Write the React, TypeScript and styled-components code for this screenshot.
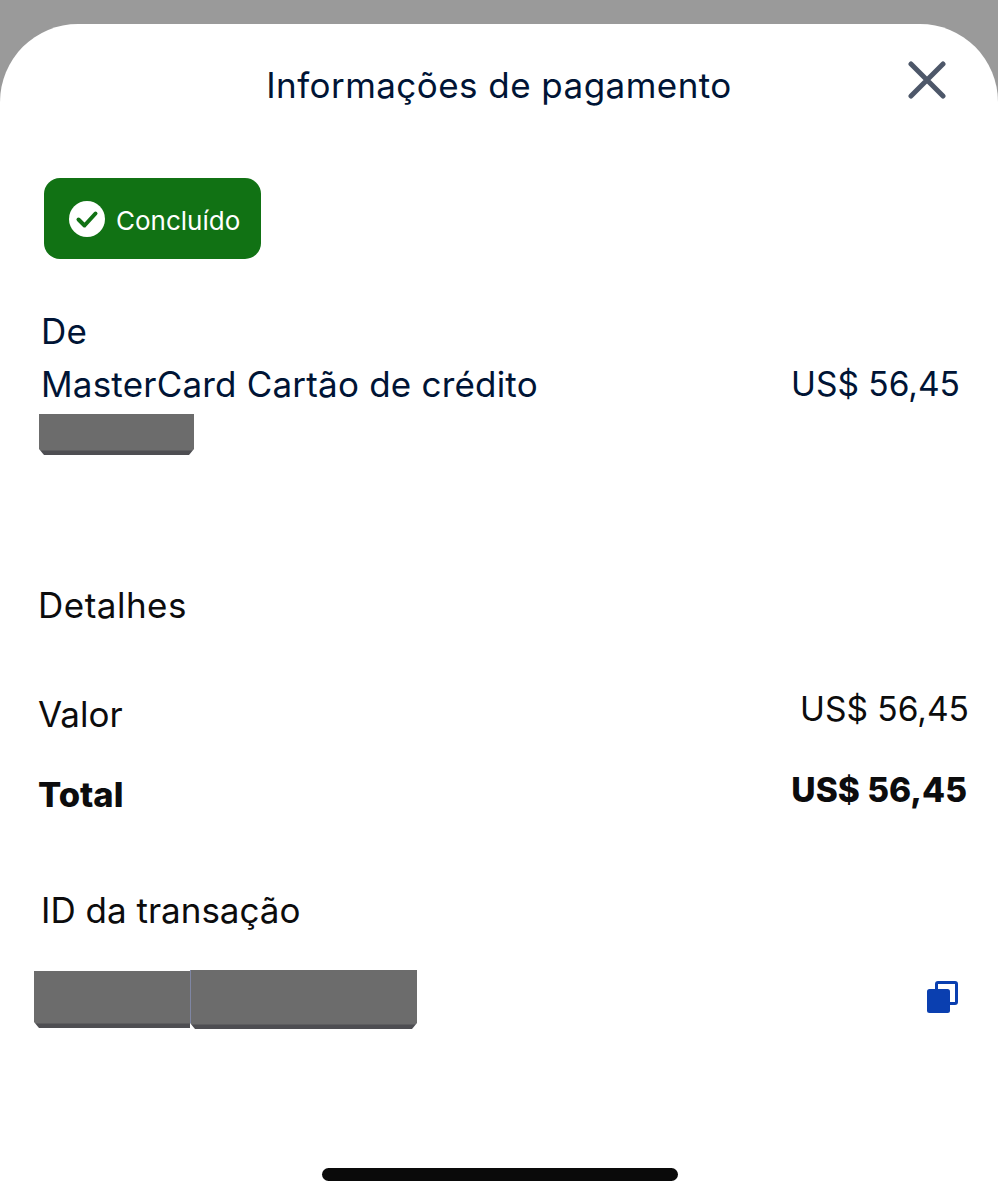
import styled, { createGlobalStyle } from 'styled-components';

const GlobalStyle = createGlobalStyle`
  html, body {
    margin: 0;
    padding: 0;
    background: #fff;
  }
  * {
    box-sizing: border-box;
  }
`;

const App = () => (
  <>
    <GlobalStyle />
    <Backdrop>
      <Sheet>
        <Header>
          <Title>Informações de pagamento</Title>
          <CloseButton aria-label="Fechar">
            <svg width="38" height="38" viewBox="0 0 38 38" fill="none">
              <path
                d="M3 3 L35 35 M35 3 L3 35"
                stroke="#4d5769"
                strokeWidth="5"
                strokeLinecap="round"
              />
            </svg>
          </CloseButton>
        </Header>

        <Badge>
          <svg width="36" height="36" viewBox="0 0 36 36">
            <circle cx="18" cy="18" r="18" fill="#fff" />
            <path
              d="M9.5 18.5 L15.5 24.5 L26.5 12.5"
              fill="none"
              stroke="#117214"
              strokeWidth="4"
              strokeLinecap="round"
              strokeLinejoin="round"
            />
          </svg>
          <BadgeLabel>Concluído</BadgeLabel>
        </Badge>

        <SourceSection>
          <NavyText>De</NavyText>
          <SourceRow>
            <NavyText>MasterCard Cartão de crédito</NavyText>
            <SourceAmount>US$ 56,45</SourceAmount>
          </SourceRow>
          <CardMask $width={155} $height={41} />
        </SourceSection>

        <DetailsHeading>Detalhes</DetailsHeading>

        <AmountRow $top={60}>
          <AmountLabel>Valor</AmountLabel>
          <AmountValue>US$ 56,45</AmountValue>
        </AmountRow>
        <AmountRow $top={41}>
          <AmountLabel $bold>Total</AmountLabel>
          <AmountValue $bold>US$ 56,45</AmountValue>
        </AmountRow>

        <TransactionHeading>ID da transação</TransactionHeading>
        <TransactionRow>
          <RedactedGroup>
            <LeftMask $width={156} $height={57} />
            <RightMask $width={227} $height={59} />
          </RedactedGroup>
          <CopyIcon width="31" height="32" viewBox="0 0 31 32">
            <rect
              x="9.5"
              y="1.5"
              width="20"
              height="21"
              rx="1.5"
              fill="none"
              stroke="#0a3fb0"
              strokeWidth="3"
            />
            <rect x="0" y="8" width="23" height="24" rx="2.5" fill="#0a3fb0" />
          </CopyIcon>
        </TransactionRow>

        <HomeIndicator />
      </Sheet>
    </Backdrop>
  </>
);

export default App;

const Backdrop = styled.div`
  width: 998px;
  height: 1200px;
  padding-top: 24px;
  overflow: hidden;
  background: #9a9a9a;
  font-family: Inter, 'Liberation Sans', sans-serif;
`;

const Sheet = styled.main`
  display: flex;
  flex-direction: column;
  height: 1176px;
  background: #fff;
  border-radius: 78px 78px 0 0;
`;

const Header = styled.header`
  position: relative;
  display: flex;
  justify-content: center;
  height: 76px;
  padding: 37px 0 0;
`;

const Title = styled.h1`
  margin: 0;
  font-size: 35px;
  line-height: 48px;
  letter-spacing: 0.45px;
  font-weight: 400;
  color: #001435;
`;

const CloseButton = styled.button`
  position: absolute;
  top: 37px;
  right: 52px;
  display: flex;
  padding: 0;
  border: 0;
  background: none;
`;

const Badge = styled.div`
  display: flex;
  align-items: center;
  gap: 11px;
  align-self: flex-start;
  width: 217px;
  height: 81px;
  margin: 78px 0 0 44px;
  padding-left: 25px;
  border-radius: 16px;
  background: #117214;
`;

const BadgeLabel = styled.span`
  padding-top: 3px;
  font-size: 26px;
  color: #fff;
`;

const SourceSection = styled.section`
  display: flex;
  flex-direction: column;
  margin-top: 46px;
  padding-left: 41px;
  padding-right: 38px;
`;

const NavyText = styled.span`
  font-size: 35px;
  line-height: 53px;
  letter-spacing: 0.2px;
  color: #001435;
`;

const SourceAmount = styled.span`
  font-size: 33.5px;
  line-height: 53px;
  color: #001435;
`;

const SourceRow = styled.div`
  display: flex;
  justify-content: space-between;
`;

const Redacted = styled.div<{ $width: number; $height: number }>`
  width: ${({ $width }) => $width}px;
  height: ${({ $height }) => $height}px;
  clip-path: polygon(0 0, 100% 0, 100% calc(100% - 6px), calc(100% - 5px) 100%, 5px 100%, 0 calc(100% - 6px));
  background: linear-gradient(
    to bottom,
    #6c6c6c 0,
    #6c6c6c calc(100% - 5px),
    #4e4e52 calc(100% - 4px),
    #4e4e52 100%
  );
`;

const CardMask = styled(Redacted)`
  margin: 3px 0 0 -2px;
`;

const LeftMask = styled(Redacted)`
  margin-top: 1px;
  clip-path: polygon(0 0, 100% 0, 100% 100%, 5px 100%, 0 calc(100% - 6px));
`;

const RightMask = styled(Redacted)`
  border-left: 1px solid #7f86a3;
`;

const DetailsHeading = styled.h2`
  margin: 126px 0 0 38px;
  font-size: 35px;
  line-height: 48px;
  letter-spacing: 0.5px;
  font-weight: 400;
  color: #0c0c0d;
`;

const AmountRow = styled.div<{ $top: number }>`
  display: flex;
  justify-content: space-between;
  margin-top: ${({ $top }) => $top}px;
  height: 40px;
  padding: 0 29px 0 38px;
`;

const AmountLabel = styled.span<{ $bold?: boolean }>`
  padding-top: 5px;
  font-size: ${({ $bold }) => ($bold ? 34.5 : 35)}px;
  line-height: 40px;
  font-weight: ${({ $bold }) => ($bold ? 800 : 400)};
  color: #0c0c0d;
`;

const AmountValue = styled.span<{ $bold?: boolean }>`
  margin-right: ${({ $bold }) => ($bold ? 2 : 0)}px;
  font-size: 33.5px;
  line-height: 40px;
  font-weight: ${({ $bold }) => ($bold ? 800 : 400)};
  color: #0c0c0d;
`;

const TransactionHeading = styled.h2`
  margin: 76px 0 0 41px;
  font-size: 35px;
  line-height: 48px;
  font-weight: 400;
  color: #0c0c0d;
`;

const TransactionRow = styled.div`
  display: flex;
  align-items: flex-start;
  justify-content: space-between;
  margin-top: 36px;
  padding: 0 40px 0 34px;
`;

const RedactedGroup = styled.div`
  display: flex;
  align-items: flex-start;
  width: 383px;
`;

const CopyIcon = styled.svg`
  margin-top: 11px;
`;

const HomeIndicator = styled.div`
  align-self: flex-start;
  width: 356px;
  height: 13px;
  margin: auto 0 19px 322px;
  border-radius: 7px;
  background: #0a0a0a;
`;
